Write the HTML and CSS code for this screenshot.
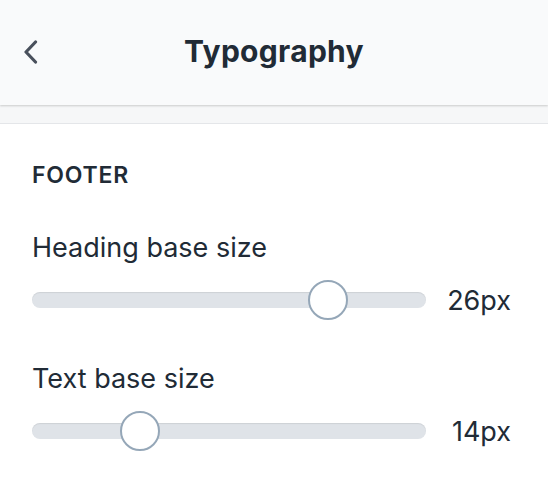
FILE: index.html
```html
<!DOCTYPE html>
<html>
<head>
<meta charset="utf-8">
<link rel="stylesheet" href="styles.css">
</head>
<body>
<div class="header">
  <div class="back">
    <svg width="16" height="24" viewBox="0 0 16 24"><path d="M12.5 2 L3 12 L12.5 22" fill="none" stroke="#49505c" stroke-width="3.2" stroke-linecap="round" stroke-linejoin="round"/></svg>
  </div>
  <div class="title">Typography</div>
</div>
<div class="strip"></div>
<div class="content">
  <div class="section">FOOTER</div>
  <div class="field first">
    <div class="label">Heading base size</div>
    <div class="row">
      <div class="track"><div class="thumb" style="left: 75%"></div></div>
      <div class="value">26px</div>
    </div>
  </div>
  <div class="field">
    <div class="label">Text base size</div>
    <div class="row">
      <div class="track"><div class="thumb" style="left: 27.3%"></div></div>
      <div class="value">14px</div>
    </div>
  </div>
</div>
</body>
</html>
```
FILE: styles.css
```css
html, body {
  margin: 0;
  padding: 0;
  background: #ffffff;
  font-family: Inter, "Noto Sans", sans-serif;
  color: #212b36;
}
.header {
  position: relative;
  height: 105px;
  background: #f9fafb;
  display: flex;
  align-items: center;
  justify-content: center;
  box-shadow: 0 1px 2px rgba(0, 0, 0, 0.18);
}
.back {
  position: absolute;
  left: 23px;
  top: 40px;
  width: 16px;
  height: 24px;
}
.back svg { display: block; }
.title {
  font-size: 30px;
  line-height: 36px;
  font-weight: 700;
  letter-spacing: 0.3px;
  margin-top: -3px;
}
.strip {
  height: 18px;
  background: #f6f7f8;
  border-bottom: 1px solid #e4e6e9;
}
.content {
  padding: 37px 37px 0 32px;
}
.section {
  font-size: 23px;
  font-weight: 600;
  letter-spacing: 0.8px;
  line-height: 28px;
}
.label {
  font-size: 27px;
  line-height: 32px;
  margin-top: 33px;
}
.field.first .label { margin-top: 43px; }
.row {
  display: flex;
  align-items: center;
  height: 60px;
  gap: 21px;
  margin-top: 6px;
}
.track {
  position: relative;
  flex: 1;
  height: 16px;
  border-radius: 8px;
  background: #dfe3e8;
  box-shadow: inset 0 1px 1px rgba(0, 0, 0, 0.08);
}
.thumb {
  position: absolute;
  top: 50%;
  width: 36px;
  height: 36px;
  margin-left: -20px;
  margin-top: -20px;
  border-radius: 50%;
  background: #ffffff;
  border: 2px solid #95a7b8;
}
.value {
  font-size: 27px;
  width: 64px;
  text-align: right;
}
```
